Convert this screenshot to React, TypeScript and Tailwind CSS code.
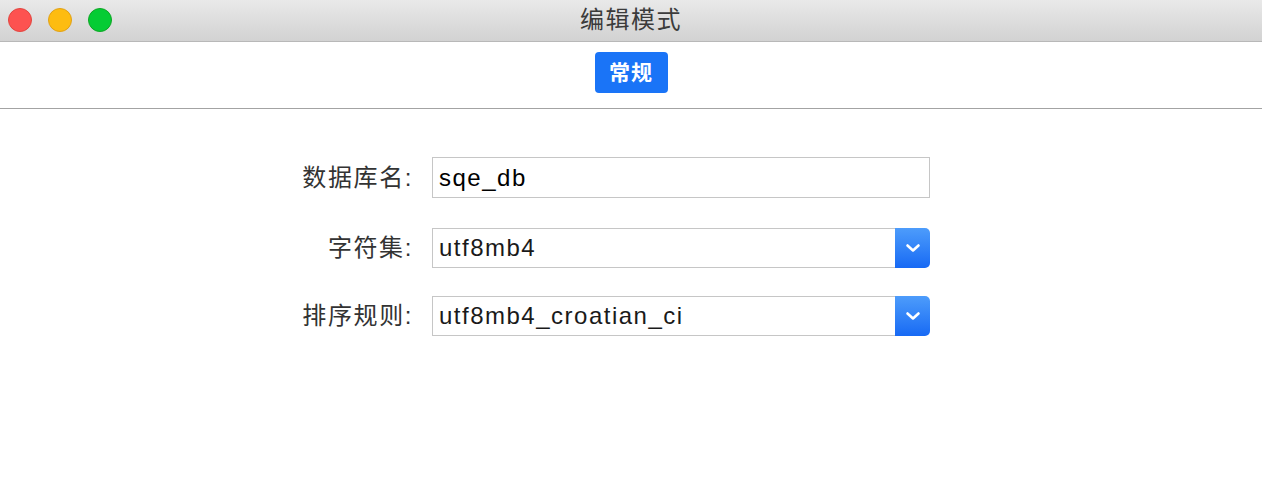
import React from "react";

const sans = "font-['Liberation_Sans','Noto_Sans_CJK_SC',sans-serif]";

function Chevron() {
  return (
    <svg width="16" height="10" viewBox="0 0 16 10" fill="none">
      <path d="M2.5 2.5 L8 7.5 L13.5 2.5" stroke="white" strokeWidth="2.6" strokeLinecap="round" strokeLinejoin="round" />
    </svg>
  );
}

function Row({ label, children }: { label: string; children: React.ReactNode }) {
  return (
    <div className="flex items-center">
      <div className={`w-[130px] text-right text-[24px] tracking-[1.6px] text-[#333] ${sans}`}>{label}</div>
      <div className="ml-[19px]">{children}</div>
    </div>
  );
}

function SelectBox({ value }: { value: string }) {
  return (
    <div className="flex h-[40px] w-[498px]">
      <div className={`flex flex-1 items-center border border-r-0 border-[#c6c6c6] pl-[6px] text-[24px] tracking-[1.5px] text-[#1a1a1a] ${sans}`}>
        {value}
      </div>
      <div className="flex w-[35px] items-center justify-center rounded-r-[5px] bg-gradient-to-b from-[#4d9cfb] to-[#1769f4]">
        <Chevron />
      </div>
    </div>
  );
}

export default function App() {
  return (
    <div className={`h-[482px] w-[1262px] bg-white ${sans}`}>
      <div className="relative flex h-[42px] items-center justify-center border-b border-[#b8b8b8] bg-gradient-to-b from-[#e9e9e9] to-[#d2d2d2]">
        <div className="absolute left-[8px] top-[8px] flex gap-[16px]">
          <div className="h-[24px] w-[24px] rounded-full border border-[#e2463f] bg-[#fd5250]" />
          <div className="h-[24px] w-[24px] rounded-full border border-[#e1a116] bg-[#fdbc11]" />
          <div className="h-[24px] w-[24px] rounded-full border border-[#0ea624] bg-[#05cc34]" />
        </div>
        <div className="-mt-[1px] text-[24px] tracking-[1.5px] text-[#3b3b3b]">编辑模式</div>
      </div>
      <div className="flex justify-center border-b border-[#a3a3a3] pb-[15px] pt-[10px]">
        <div className="flex h-[41px] w-[73px] items-center justify-center rounded-[4px] bg-[#1a74f7] text-[21px] font-bold tracking-[1px] text-white">
          常规
        </div>
      </div>
      <div className="flex flex-col pl-[283px] pt-[48px]">
        <Row label="数据库名:">
          <div className={`flex h-[41px] w-[498px] items-center border border-[#c6c6c6] pl-[6px] text-[24px] tracking-[1.5px] text-black ${sans}`}>
            sqe_db
          </div>
        </Row>
        <div className="mt-[30px]">
          <Row label="字符集:">
            <SelectBox value="utf8mb4" />
          </Row>
        </div>
        <div className="mt-[28px]">
          <Row label="排序规则:">
            <SelectBox value="utf8mb4_croatian_ci" />
          </Row>
        </div>
      </div>
    </div>
  );
}
